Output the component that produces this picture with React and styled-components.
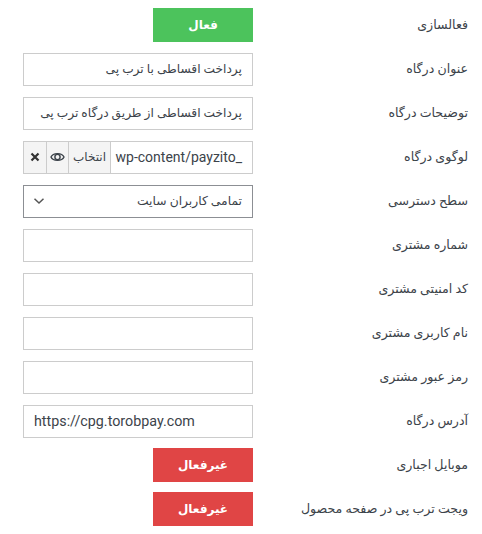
import React from "react"
import styled, { createGlobalStyle } from "styled-components"

const Global = createGlobalStyle`
  body {
    margin: 0;
    background: #ffffff;
    font-family: Roboto, "DejaVu Sans", sans-serif;
    color: #3c434a;
  }
`

const Form = styled.div`
  direction: rtl;
  display: grid;
  grid-template-columns: 215px 230px;
  grid-auto-rows: 44px;
  align-items: center;
  padding: 3px 14px 0 23px;
`

const Label = styled.div`
  font-size: 12.6px;
  color: #3c434a;
  white-space: nowrap;
  margin-top: -2px;
`

const Toggle = styled.div`
  justify-self: start;
  width: 100px;
  height: 34px;
  display: flex;
  align-items: center;
  justify-content: center;
  background: ${(p) => (p.on ? "#4cc35c" : "#e04545")};
  color: #ffffff;
  font-size: 12px;
  font-weight: bold;
`

const Field = styled.input`
  box-sizing: border-box;
  width: 230px;
  height: 33px;
  margin: 0;
  padding: 0 10px;
  border: 1px solid #cccccc;
  border-radius: 0;
  background: #ffffff;
  font-family: Roboto, "DejaVu Sans", sans-serif;
  font-size: ${(p) => (p.ltr ? "14.3px" : "12.2px")};
  color: #3c434a;
  direction: ${(p) => (p.ltr ? "ltr" : "rtl")};
  outline: none;
`

const Group = styled.div`
  display: flex;
  width: 230px;
  height: 33px;
  box-sizing: border-box;
  border: 1px solid #cccccc;
`

const GroupText = styled.div`
  flex: 1;
  direction: ltr;
  display: flex;
  align-items: center;
  justify-content: flex-end;
  padding: 0 10px;
  font-size: 14px;
  white-space: nowrap;
  overflow: hidden;
  background: #ffffff;
`

const GroupBtn = styled.div`
  width: ${(p) => p.w}px;
  flex: none;
  display: flex;
  align-items: center;
  justify-content: center;
  background: #f4f4f4;
  border-right: 1px solid #cccccc;
  font-size: 12px;
  color: #3c434a;
`

const Select = styled.div`
  box-sizing: border-box;
  width: 230px;
  height: 33px;
  display: flex;
  align-items: center;
  justify-content: space-between;
  padding: 0 10px 0 9px;
  border: 1px solid #8c8f94;
  font-size: 12.3px;
`

const Eye = () => (
  <svg width="15" height="12" viewBox="0 0 15 12">
    <path d="M1 6 C3 1.5 12 1.5 14 6 C12 10.5 3 10.5 1 6 Z" fill="none" stroke="#3c434a" strokeWidth="1.4" />
    <circle cx="7.5" cy="6" r="2.6" fill="none" stroke="#3c434a" strokeWidth="1.4" />
  </svg>
)

const Cross = () => (
  <svg width="10" height="10" viewBox="0 0 10 10">
    <path d="M1.5 1.5 L8.5 8.5 M8.5 1.5 L1.5 8.5" stroke="#333" strokeWidth="2.2" />
  </svg>
)

const Chevron = () => (
  <svg width="12" height="8" viewBox="0 0 12 8">
    <path d="M1.5 1.8 L6 6 L10.5 1.8" fill="none" stroke="#555" strokeWidth="1.5" />
  </svg>
)

const App = () => (
  <>
    <Global />
    <Form>
      <Label>فعالسازی</Label>
      <Toggle on>فعال</Toggle>

      <Label>عنوان درگاه</Label>
      <Field readOnly value="پرداخت اقساطی با ترب پی" />

      <Label>توضیحات درگاه</Label>
      <Field readOnly value="پرداخت اقساطی از طریق درگاه ترب پی" />

      <Label>لوگوی درگاه</Label>
      <Group>
        <GroupText>wp-content/payzito_</GroupText>
        <GroupBtn w={41}>انتخاب</GroupBtn>
        <GroupBtn w={21}><Eye /></GroupBtn>
        <GroupBtn w={22}><Cross /></GroupBtn>
      </Group>

      <Label>سطح دسترسی</Label>
      <Select>
        <span>تمامی کاربران سایت</span>
        <Chevron />
      </Select>

      <Label>شماره مشتری</Label>
      <Field readOnly value="" />

      <Label>کد امنیتی مشتری</Label>
      <Field readOnly value="" />

      <Label>نام کاربری مشتری</Label>
      <Field readOnly value="" />

      <Label>رمز عبور مشتری</Label>
      <Field readOnly value="" />

      <Label>آدرس درگاه</Label>
      <Field readOnly ltr value="https://cpg.torobpay.com" />

      <Label>موبایل اجباری</Label>
      <Toggle>غیرفعال</Toggle>

      <Label>ویجت ترب پی در صفحه محصول</Label>
      <Toggle>غیرفعال</Toggle>
    </Form>
  </>
)

export default App
